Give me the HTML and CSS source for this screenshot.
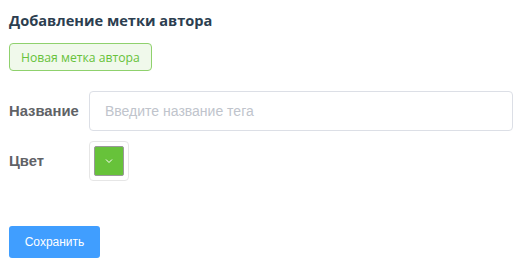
FILE: index.html
```html
<!DOCTYPE html>
<html lang="ru">
<head>
<meta charset="utf-8">
<link rel="stylesheet" href="styles.css">
</head>
<body>
<div class="page">
  <h3 class="title">Добавление метки автора</h3>
  <div class="tag-row"><span class="tag">Новая метка автора</span></div>
  <form class="form">
    <div class="form-item">
      <label class="label">Название</label>
      <div class="control"><input class="input" type="text" placeholder="Введите название тега"></div>
    </div>
    <div class="form-item">
      <label class="label">Цвет</label>
      <div class="control">
        <div class="picker">
          <div class="swatch">
            <svg class="chev" width="10" height="10" viewBox="0 0 10 10"><path d="M2 3.5 L5 6.5 L8 3.5" fill="none" stroke="#fff" stroke-width="1"/></svg>
          </div>
        </div>
      </div>
    </div>
  </form>
  <button class="btn" type="button">Сохранить</button>
</div>
</body>
</html>
```
FILE: styles.css
```css
html, body { margin: 0; padding: 0; background: #fff; }
.page { padding: 9px 9px 0 9px; width: 504px; }
.title {
  margin: 3px 0 0 0;
  font-family: "Open Sans", "Noto Sans", sans-serif;
  font-weight: 700;
  font-size: 14.6px;
  line-height: 16px;
  color: #2c3e50;
}
.tag-row { margin-top: 15px; display: flex; }
.tag {
  box-sizing: border-box;
  height: 28px;
  padding: 0 11px;
  display: inline-flex;
  align-items: center;
  font-family: "Open Sans", "Noto Sans", sans-serif;
  font-size: 12.2px;
  color: #67c23a;
  background: #f0f9eb;
  border: 1px solid #8fd16d;
  border-radius: 4px;
}
.form { margin-top: 20px; }
.form-item { display: flex; align-items: center; margin-bottom: 10px; }
.label {
  width: 80px;
  flex: none;
  font-family: "Liberation Sans", Arial, sans-serif;
  font-weight: 700;
  font-size: 14.8px;
  color: #606266;
}
.control { flex: 1; }
.input {
  box-sizing: border-box;
  width: 100%;
  height: 40px;
  border: 1px solid #dcdfe6;
  border-radius: 4px;
  padding: 0 15px;
  font-family: "Liberation Sans", Arial, sans-serif;
  font-size: 14px;
  color: #606266;
  outline: none;
}
.input::placeholder { color: #c0c4cc; }
.picker {
  box-sizing: border-box;
  width: 40px;
  height: 40px;
  border: 1px solid #e6e6e6;
  border-radius: 4px;
  padding: 4px;
}
.swatch {
  box-sizing: border-box;
  width: 30px;
  height: 30px;
  background: #67c23a;
  border: 1px solid #999;
  border-radius: 2px;
  display: flex;
  align-items: center;
  justify-content: center;
}
.btn {
  margin-top: 35px;
  box-sizing: border-box;
  width: 91px;
  height: 32px;
  border: none;
  border-radius: 3px;
  background: #409eff;
  color: #fff;
  font-family: "Liberation Sans", Arial, sans-serif;
  font-size: 12px;
  padding: 0;
}
```
